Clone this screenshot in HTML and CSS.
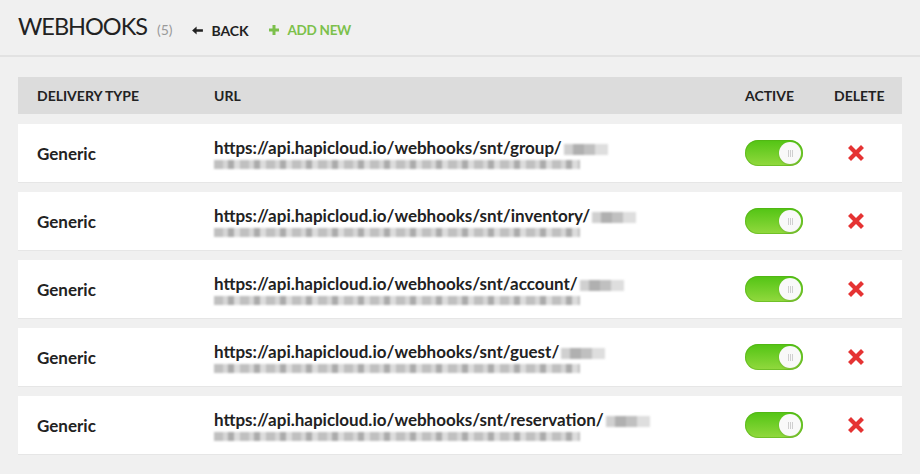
FILE: index.html
```html
<!DOCTYPE html>
<html>
<head>
<meta charset="utf-8">
<link rel="stylesheet" href="styles.css">
</head>
<body>
<div class="page">
  <header class="topbar">
    <h1 class="title">WEBHOOKS</h1>
    <span class="count">(5)</span>
    <a class="action back"><svg class="ico" viewBox="0 0 12 10" width="11" height="9"><path d="M0 5 L5 0.5 L5 3.5 L12 3.5 L12 6.5 L5 6.5 L5 9.5 Z" fill="#222"/></svg>BACK</a>
    <a class="action add"><svg class="ico" viewBox="0 0 10 10" width="10" height="10"><path d="M3.5 0 H6.5 V3.5 H10 V6.5 H6.5 V10 H3.5 V6.5 H0 V3.5 H3.5 Z" fill="#7cc04b"/></svg>ADD NEW</a>
  </header>
  <div class="table">
    <div class="thead">
      <div class="c-type">DELIVERY TYPE</div>
      <div class="c-url">URL</div>
      <div class="c-active">ACTIVE</div>
      <div class="c-del">DELETE</div>
    </div>
    <div class="row">
      <div class="c-type">Generic</div>
      <div class="c-url"><div class="url">https://api.hapicloud.io/webhooks/snt/group/<span class="blur"></span></div><div class="blurline"></div></div>
      <div class="c-active"><span class="toggle"><span class="knob"></span></span></div>
      <div class="c-del"><svg class="x" viewBox="0 0 16 16" width="16" height="16"><path d="M3 3 L13 13 M13 3 L3 13" stroke="#e53333" stroke-width="4.2" stroke-linecap="square"/></svg></div>
    </div>
    <div class="row">
      <div class="c-type">Generic</div>
      <div class="c-url"><div class="url">https://api.hapicloud.io/webhooks/snt/inventory/<span class="blur"></span></div><div class="blurline"></div></div>
      <div class="c-active"><span class="toggle"><span class="knob"></span></span></div>
      <div class="c-del"><svg class="x" viewBox="0 0 16 16" width="16" height="16"><path d="M3 3 L13 13 M13 3 L3 13" stroke="#e53333" stroke-width="4.2" stroke-linecap="square"/></svg></div>
    </div>
    <div class="row">
      <div class="c-type">Generic</div>
      <div class="c-url"><div class="url">https://api.hapicloud.io/webhooks/snt/account/<span class="blur"></span></div><div class="blurline"></div></div>
      <div class="c-active"><span class="toggle"><span class="knob"></span></span></div>
      <div class="c-del"><svg class="x" viewBox="0 0 16 16" width="16" height="16"><path d="M3 3 L13 13 M13 3 L3 13" stroke="#e53333" stroke-width="4.2" stroke-linecap="square"/></svg></div>
    </div>
    <div class="row">
      <div class="c-type">Generic</div>
      <div class="c-url"><div class="url">https://api.hapicloud.io/webhooks/snt/guest/<span class="blur"></span></div><div class="blurline"></div></div>
      <div class="c-active"><span class="toggle"><span class="knob"></span></span></div>
      <div class="c-del"><svg class="x" viewBox="0 0 16 16" width="16" height="16"><path d="M3 3 L13 13 M13 3 L3 13" stroke="#e53333" stroke-width="4.2" stroke-linecap="square"/></svg></div>
    </div>
    <div class="row">
      <div class="c-type">Generic</div>
      <div class="c-url"><div class="url">https://api.hapicloud.io/webhooks/snt/reservation/<span class="blur"></span></div><div class="blurline"></div></div>
      <div class="c-active"><span class="toggle"><span class="knob"></span></span></div>
      <div class="c-del"><svg class="x" viewBox="0 0 16 16" width="16" height="16"><path d="M3 3 L13 13 M13 3 L3 13" stroke="#e53333" stroke-width="4.2" stroke-linecap="square"/></svg></div>
    </div>
  </div>
</div>
</body>
</html>
```
FILE: styles.css
```css
html, body { margin: 0; padding: 0; }
body {
  background: #f0f0f0;
  font-family: Lato, "Open Sans", sans-serif;
  color: #222;
  width: 920px;
  height: 474px;
  overflow: hidden;
}
.page { padding: 0 18px; }
.topbar {
  display: flex;
  align-items: baseline;
  height: 57px;
  box-sizing: border-box;
  padding-top: 12px;
  border-bottom: 2px solid #e2e2e2;
  margin: 0 -18px;
  padding-left: 18px;
}
.title {
  margin: 0;
  font-size: 23.5px;
  font-weight: 400;
  letter-spacing: -1px;
  color: #222;
}
.count { font-size: 14px; color: #9a9a9a; margin-left: 10px; }
.action {
  font-size: 14px;
  font-weight: 700;
  display: inline-flex;
  align-items: center;
}
.back { color: #222; margin-left: 19px; letter-spacing: -0.1px; }
.add { color: #7cc04b; margin-left: 20px; font-size: 13.5px; letter-spacing: -0.3px; }
.ico { margin-right: 9px; }
.table { margin-top: 20px; }
.thead {
  display: flex;
  align-items: center;
  height: 37px;
  background: #dcdcdc;
  font-size: 14px;
  font-weight: 700;
  margin-bottom: 10px;
}
.row {
  display: flex;
  align-items: center;
  height: 58px;
  background: #fff;
  margin-bottom: 10px;
  box-shadow: 0 1px 0 #e6e6e6;
}
.c-type { width: 196px; padding-left: 19px; box-sizing: border-box; }
.row .c-type { font-size: 17px; font-weight: 700; }
.c-url { flex: 1; }
.c-active { width: 89px; }
.c-del { width: 68px; }
.row .c-del { padding-left: 14px; box-sizing: border-box; display: flex; align-items: center; }
.url { font-size: 17px; font-weight: 700; line-height: 19px; }
.blur {
  display: inline-block;
  vertical-align: -1px;
  margin-left: 2px;
  width: 44px;
  height: 11px;
  background: linear-gradient(90deg, #d0d0d0 0 20%, #b0b0b0 20% 45%, #c0c0c0 45% 70%, #dedede 70%);
  filter: blur(1px);
}
.blurline {
  margin-top: 3px;
  width: 366px;
  height: 9px;
  background: repeating-linear-gradient(90deg, #c0c0c0 0 9px, #d6d6d6 9px 14px, #ababab 14px 20px, #dcdcdc 20px 26px);
  filter: blur(0.8px);
}
.toggle {
  display: block;
  width: 58px;
  height: 26px;
  border-radius: 13px;
  background: linear-gradient(#52c414, #92d93e);
  box-shadow: inset 0 0 0 1px rgba(80,170,20,0.5);
  position: relative;
}
.knob {
  position: absolute;
  right: 2px;
  top: 2px;
  width: 22px;
  height: 22px;
  border-radius: 50%;
  background: #f9f9f9;
  box-shadow: 0 1px 2px rgba(0,0,0,0.15);
  display: flex;
  align-items: center;
  justify-content: center;
}
.knob::after {
  content: "";
  width: 5px;
  height: 7px;
  background: repeating-linear-gradient(90deg, #cfcfcf 0 1px, transparent 1px 2px);
}
.x { display: block; }
```
